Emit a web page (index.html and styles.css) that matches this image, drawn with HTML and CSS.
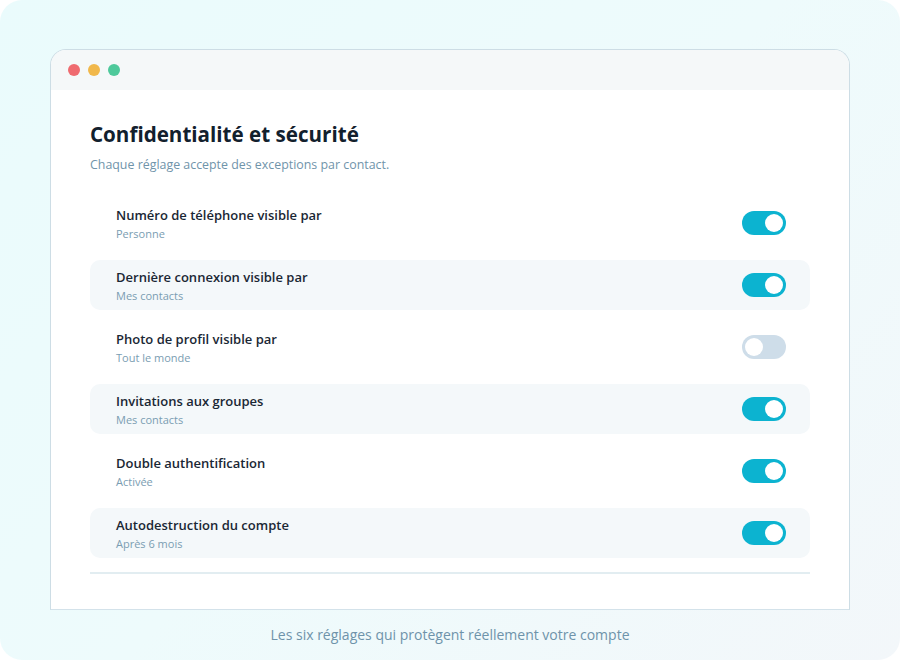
FILE: index.html
```html
<!DOCTYPE html>
<html lang="fr">
<head>
<meta charset="utf-8">
<title>Confidentialité et sécurité</title>
<link rel="stylesheet" href="styles.css">
</head>
<body>
<div class="stage">
  <div class="window">
    <div class="titlebar">
      <span class="dot red"></span>
      <span class="dot yellow"></span>
      <span class="dot green"></span>
    </div>
    <div class="content">
      <h1 class="title">Confidentialité et sécurité</h1>
      <p class="subtitle">Chaque réglage accepte des exceptions par contact.</p>
      <ul class="list">
        <li class="row">
          <div class="text"><div class="label">Numéro de téléphone visible par</div><div class="value">Personne</div></div>
          <span class="toggle on"><span class="knob"></span></span>
        </li>
        <li class="row alt">
          <div class="text"><div class="label">Dernière connexion visible par</div><div class="value">Mes contacts</div></div>
          <span class="toggle on"><span class="knob"></span></span>
        </li>
        <li class="row">
          <div class="text"><div class="label">Photo de profil visible par</div><div class="value">Tout le monde</div></div>
          <span class="toggle off"><span class="knob"></span></span>
        </li>
        <li class="row alt">
          <div class="text"><div class="label">Invitations aux groupes</div><div class="value">Mes contacts</div></div>
          <span class="toggle on"><span class="knob"></span></span>
        </li>
        <li class="row">
          <div class="text"><div class="label">Double authentification</div><div class="value">Activée</div></div>
          <span class="toggle on"><span class="knob"></span></span>
        </li>
        <li class="row alt">
          <div class="text"><div class="label">Autodestruction du compte</div><div class="value">Après 6 mois</div></div>
          <span class="toggle on"><span class="knob"></span></span>
        </li>
      </ul>
      <div class="divider"></div>
    </div>
  </div>
  <p class="caption">Les six réglages qui protègent réellement votre compte</p>
</div>
</body>
</html>
```

FILE: styles.css
```css
* { box-sizing: border-box; }
html, body { margin: 0; padding: 0; background: #ffffff; }
body {
  width: 900px;
  height: 660px;
  font-family: "Open Sans", "Noto Sans", "Liberation Sans", sans-serif;
  overflow: hidden;
}
.stage {
  width: 900px;
  height: 660px;
  border-radius: 22px;
  background: linear-gradient(135deg, #eafbfc 0%, #eefbfc 50%, #f3f7fa 100%);
  padding: 49px 50px 0 50px;
  display: flex;
  flex-direction: column;
}
.window {
  height: 561px;
  background: #ffffff;
  border: 1px solid #cddde5;
  border-bottom-color: #d3e2ea;
  border-radius: 16px 16px 0 0;
  overflow: hidden;
  display: flex;
  flex-direction: column;
}
.titlebar {
  height: 40px;
  flex: none;
  background: #f5f8f9;
  display: flex;
  align-items: center;
  gap: 8px;
  padding-left: 17px;
}
.dot { width: 12px; height: 12px; border-radius: 50%; display: block; }
.red { background: #ef6b70; }
.yellow { background: #f1b84b; }
.green { background: #4ec99b; }
.content {
  padding: 30px 39px 0 39px;
}
.title {
  margin: 0;
  font-size: 20.6px;
  line-height: 28px;
  font-weight: 700;
  color: #12202d;
}
.subtitle {
  margin: 8px 0 0 0;
  font-size: 12.4px;
  line-height: 18px;
  color: #7094aa;
}
.list {
  list-style: none;
  margin: 24px 0 0 0;
  padding: 0;
  display: flex;
  flex-direction: column;
  gap: 12px;
}
.row {
  height: 50px;
  border-radius: 10px;
  padding: 0 24px 0 26px;
  display: flex;
  align-items: center;
  justify-content: space-between;
}
.row.alt { background: #f4f8fa; }
.label {
  font-size: 13px;
  line-height: 18px;
  font-weight: 600;
  color: #1a2734;
}
.value {
  font-size: 11px;
  line-height: 15px;
  color: #7a9db2;
  margin-top: 2px;
}
.toggle {
  width: 44px;
  height: 24px;
  border-radius: 12px;
  padding: 3px;
  display: flex;
  align-items: center;
}
.toggle.on { background: #0cb3d0; justify-content: flex-end; }
.toggle.off { background: #cedde9; justify-content: flex-start; }
.knob {
  width: 18px;
  height: 18px;
  border-radius: 50%;
  background: #ffffff;
  display: block;
}
.divider {
  height: 2px;
  background: #e2edf1;
  margin-top: 14px;
}
.caption {
  margin: 16px 0 0 0;
  text-align: center;
  font-size: 14px;
  line-height: 18px;
  color: #6e93aa;
}
```
